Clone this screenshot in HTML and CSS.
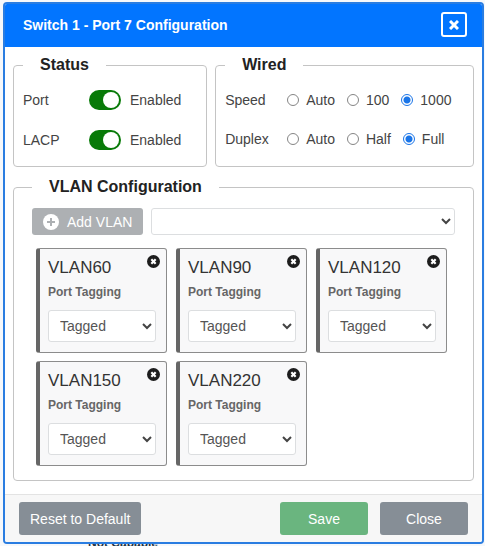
FILE: index.html
```html
<!DOCTYPE html>
<html lang="en">
<head>
  <meta charset="UTF-8">
  <meta name="viewport" content="width=device-width, initial-scale=1.0">
  <title>Switch 1 - Port 7 Configuration</title>
  <link rel="stylesheet" href="styles.css">
</head>
<body>
  <svg class="sprite" aria-hidden="true">
    <symbol id="icon-remove" viewBox="0 0 12 12">
      <circle cx="6" cy="6" r="6" fill="currentColor"/>
      <path d="M4 4l4 4M8 4l-4 4" stroke="#fff" stroke-width="2"/>
    </symbol>
  </svg>

  <form class="modal">
    <header class="modal-header">
      <h1 class="modal-title">Switch 1 - Port 7 Configuration</h1>
      <button type="button" class="btn-x" aria-label="Close dialog">
        <svg width="10" height="10" viewBox="0 0 10 10"><path d="M1 1l8 8M9 1l-8 8" stroke="currentColor" stroke-width="3"/></svg>
      </button>
    </header>

    <div class="modal-body">
      <div class="top-row">
        <fieldset class="group status">
          <legend>Status</legend>
          <div class="field">
            <span class="field-name">Port</span>
            <label class="switch"><input type="checkbox" checked>Enabled</label>
          </div>
          <div class="field">
            <span class="field-name">LACP</span>
            <label class="switch"><input type="checkbox" checked>Enabled</label>
          </div>
        </fieldset>

        <fieldset class="group wired">
          <legend>Wired</legend>
          <div class="field">
            <span class="field-name">Speed</span>
            <label class="radio"><input type="radio" name="speed">Auto</label>
            <label class="radio"><input type="radio" name="speed">100</label>
            <label class="radio"><input type="radio" name="speed" checked>1000</label>
          </div>
          <div class="field">
            <span class="field-name">Duplex</span>
            <label class="radio"><input type="radio" name="duplex">Auto</label>
            <label class="radio"><input type="radio" name="duplex">Half</label>
            <label class="radio"><input type="radio" name="duplex" checked>Full</label>
          </div>
        </fieldset>
      </div>

      <fieldset class="group vlans">
        <legend>VLAN Configuration</legend>
        <div class="add-row">
          <button type="button" class="btn btn-add" disabled>
            <svg width="16" height="16" viewBox="0 0 16 16"><circle cx="8" cy="8" r="8" fill="#fff"/><path d="M8 4v8M4 8h8" stroke="#adb0b3" stroke-width="2"/></svg>
            Add VLAN
          </button>
          <div class="select">
            <select aria-label="VLAN to add"><option></option></select>
            <svg width="10" height="7" viewBox="0 0 10 7"><path d="M1 1l4 4 4-4"/></svg>
          </div>
        </div>

        <div class="cards">
          <div class="card">
            <div class="card-top">
              <h2>VLAN60</h2>
              <button type="button" class="remove" aria-label="Remove VLAN60"><svg width="13" height="13"><use href="#icon-remove"/></svg></button>
            </div>
            <label for="tag60">Port Tagging</label>
            <div class="select">
              <select id="tag60"><option>Tagged</option><option>Untagged</option></select>
              <svg width="10" height="7" viewBox="0 0 10 7"><path d="M1 1l4 4 4-4"/></svg>
            </div>
          </div>
          <div class="card">
            <div class="card-top">
              <h2>VLAN90</h2>
              <button type="button" class="remove" aria-label="Remove VLAN90"><svg width="13" height="13"><use href="#icon-remove"/></svg></button>
            </div>
            <label for="tag90">Port Tagging</label>
            <div class="select">
              <select id="tag90"><option>Tagged</option><option>Untagged</option></select>
              <svg width="10" height="7" viewBox="0 0 10 7"><path d="M1 1l4 4 4-4"/></svg>
            </div>
          </div>
          <div class="card">
            <div class="card-top">
              <h2>VLAN120</h2>
              <button type="button" class="remove" aria-label="Remove VLAN120"><svg width="13" height="13"><use href="#icon-remove"/></svg></button>
            </div>
            <label for="tag120">Port Tagging</label>
            <div class="select">
              <select id="tag120"><option>Tagged</option><option>Untagged</option></select>
              <svg width="10" height="7" viewBox="0 0 10 7"><path d="M1 1l4 4 4-4"/></svg>
            </div>
          </div>
          <div class="card">
            <div class="card-top">
              <h2>VLAN150</h2>
              <button type="button" class="remove" aria-label="Remove VLAN150"><svg width="13" height="13"><use href="#icon-remove"/></svg></button>
            </div>
            <label for="tag150">Port Tagging</label>
            <div class="select">
              <select id="tag150"><option>Tagged</option><option>Untagged</option></select>
              <svg width="10" height="7" viewBox="0 0 10 7"><path d="M1 1l4 4 4-4"/></svg>
            </div>
          </div>
          <div class="card">
            <div class="card-top">
              <h2>VLAN220</h2>
              <button type="button" class="remove" aria-label="Remove VLAN220"><svg width="13" height="13"><use href="#icon-remove"/></svg></button>
            </div>
            <label for="tag220">Port Tagging</label>
            <div class="select">
              <select id="tag220"><option>Tagged</option><option>Untagged</option></select>
              <svg width="10" height="7" viewBox="0 0 10 7"><path d="M1 1l4 4 4-4"/></svg>
            </div>
          </div>
        </div>
      </fieldset>
    </div>

    <footer class="modal-footer">
      <button type="reset" class="btn btn-gray btn-reset">Reset to Default</button>
      <button type="submit" class="btn btn-save">Save</button>
      <button type="button" class="btn btn-gray">Close</button>
    </footer>
  </form>
  <p class="behind">Not Capable</p>
</body>
</html>
```
FILE: styles.css
```css
* {
  box-sizing: border-box;
}
body {
  margin: 0;
  padding: 2px 1px 0 3px;
  background: #f6f8fb;
  font-family: "Liberation Sans", Arial, sans-serif;
  font-size: 14px;
  line-height: 20px;
  color: #444;
  overflow: hidden;
}
.sprite {
  display: none;
}
button, select, input {
  margin: 0;
  font: inherit;
}
svg {
  display: block;
}

/* dialog */
.modal {
  position: relative;
  z-index: 1;
  border: 2px solid #2a7de1;
  border-radius: 4px;
  background: #fff;
  overflow: hidden;
}
.modal-header {
  display: flex;
  align-items: center;
  justify-content: space-between;
  height: 43px;
  padding: 0 15px 2px 18px;
  background: #0275ff;
  color: #fff;
}
.modal-title {
  margin: 0;
  font-size: 14px;
}
.btn-x {
  display: flex;
  align-items: center;
  justify-content: center;
  width: 26px;
  height: 25px;
  padding: 0;
  border: 2px solid #fff;
  border-radius: 3px;
  background: none;
  color: #fff;
}
.modal-body {
  padding: 8px 8px 13px;
}

/* groups */
.group {
  min-width: 0;
  margin: 0;
  border: 1px solid #c4c4c4;
  border-radius: 4px;
}
.group legend {
  padding: 0 17px;
  font-size: 16px;
  font-weight: bold;
  color: #222;
}
.top-row {
  display: grid;
  grid-template-columns: 3fr 4fr;
  gap: 8px;
  margin-bottom: 10px;
}
.status, .wired {
  padding: 5px 9px 6px;
}
.field {
  display: flex;
  align-items: center;
  height: 40px;
}
.wired .field {
  height: 39px;
}
.status .field-name {
  width: 66px;
}
.wired .field-name {
  width: 62px;
}
.switch {
  display: flex;
  align-items: center;
  gap: 9px;
}
.switch input {
  appearance: none;
  display: flex;
  justify-content: flex-end;
  width: 32px;
  height: 20px;
  padding: 2px;
  border-radius: 10px;
  background: #087a08;
}
.switch input::before {
  content: "";
  width: 16px;
  height: 16px;
  border-radius: 50%;
  background: #fff;
}
.radio {
  display: flex;
  align-items: center;
  gap: 7px;
  margin-right: 12px;
}
.radio:last-child {
  margin-right: 0;
}
.radio input {
  appearance: none;
  width: 12px;
  height: 12px;
  border: 1px solid #858585;
  border-radius: 50%;
  background: #fff;
}
.radio input:checked {
  border-color: #1a75e8;
  background: radial-gradient(#1a75e8 3px, #fff 4px);
}

/* vlans */
.vlans {
  padding: 11px 18px 14px;
}
.add-row {
  display: flex;
  gap: 8px;
  margin-bottom: 13px;
}
.add-row .select {
  flex: 1;
}
.select {
  display: grid;
  align-items: center;
}
.select select, .select svg {
  grid-area: 1 / 1;
}
.select select {
  appearance: none;
  width: 100%;
  height: 27px;
  padding: 0 11px;
  border: 1px solid #dcdee0;
  border-radius: 3px;
  background: #fff;
  color: #555;
}
.select svg {
  justify-self: end;
  margin-right: 4px;
  fill: none;
  stroke: #444;
  stroke-width: 2;
  pointer-events: none;
}
.cards {
  display: flex;
  flex-wrap: wrap;
  gap: 8px 9px;
  padding-left: 4px;
}
.card {
  width: 131px;
  padding: 6px 10px 10px 8px;
  border: 1px solid #8c8c8c;
  border-left: 4px solid #666;
  border-radius: 3px;
  background: #f8f8f9;
}
.card-top {
  display: flex;
  justify-content: space-between;
  align-items: flex-start;
}
.card h2 {
  margin: 0;
  font-size: 17px;
  line-height: 26px;
  font-weight: normal;
  color: #333;
}
.remove {
  margin-right: -4px;
  padding: 0;
  border: none;
  background: none;
  color: #1d1d1d;
}
.card label {
  display: block;
  margin-bottom: 6px;
  font-size: 12px;
  line-height: 23px;
  font-weight: bold;
  color: #666;
}
.card .select select {
  height: 32px;
}

/* buttons */
.btn {
  min-width: 88px;
  height: 33px;
  padding: 0 11px;
  border: none;
  border-radius: 3px;
  color: #fff;
}
.btn-add {
  display: flex;
  align-items: center;
  gap: 8px;
  height: 27px;
  background: #adb0b3;
}
.btn-gray {
  background: #868e96;
}
.btn-save {
  background: #6ab57f;
}
.modal-footer {
  display: flex;
  gap: 12px;
  padding: 7px 14px;
  border-top: 1px solid #e3e3e3;
  background: #f7f7f7;
}
.btn-reset {
  margin-right: auto;
}

/* page under the dialog */
.behind {
  margin: -8px 0 0 85px;
  font-size: 12px;
  line-height: 14px;
  font-weight: bold;
  color: #234;
}
```
